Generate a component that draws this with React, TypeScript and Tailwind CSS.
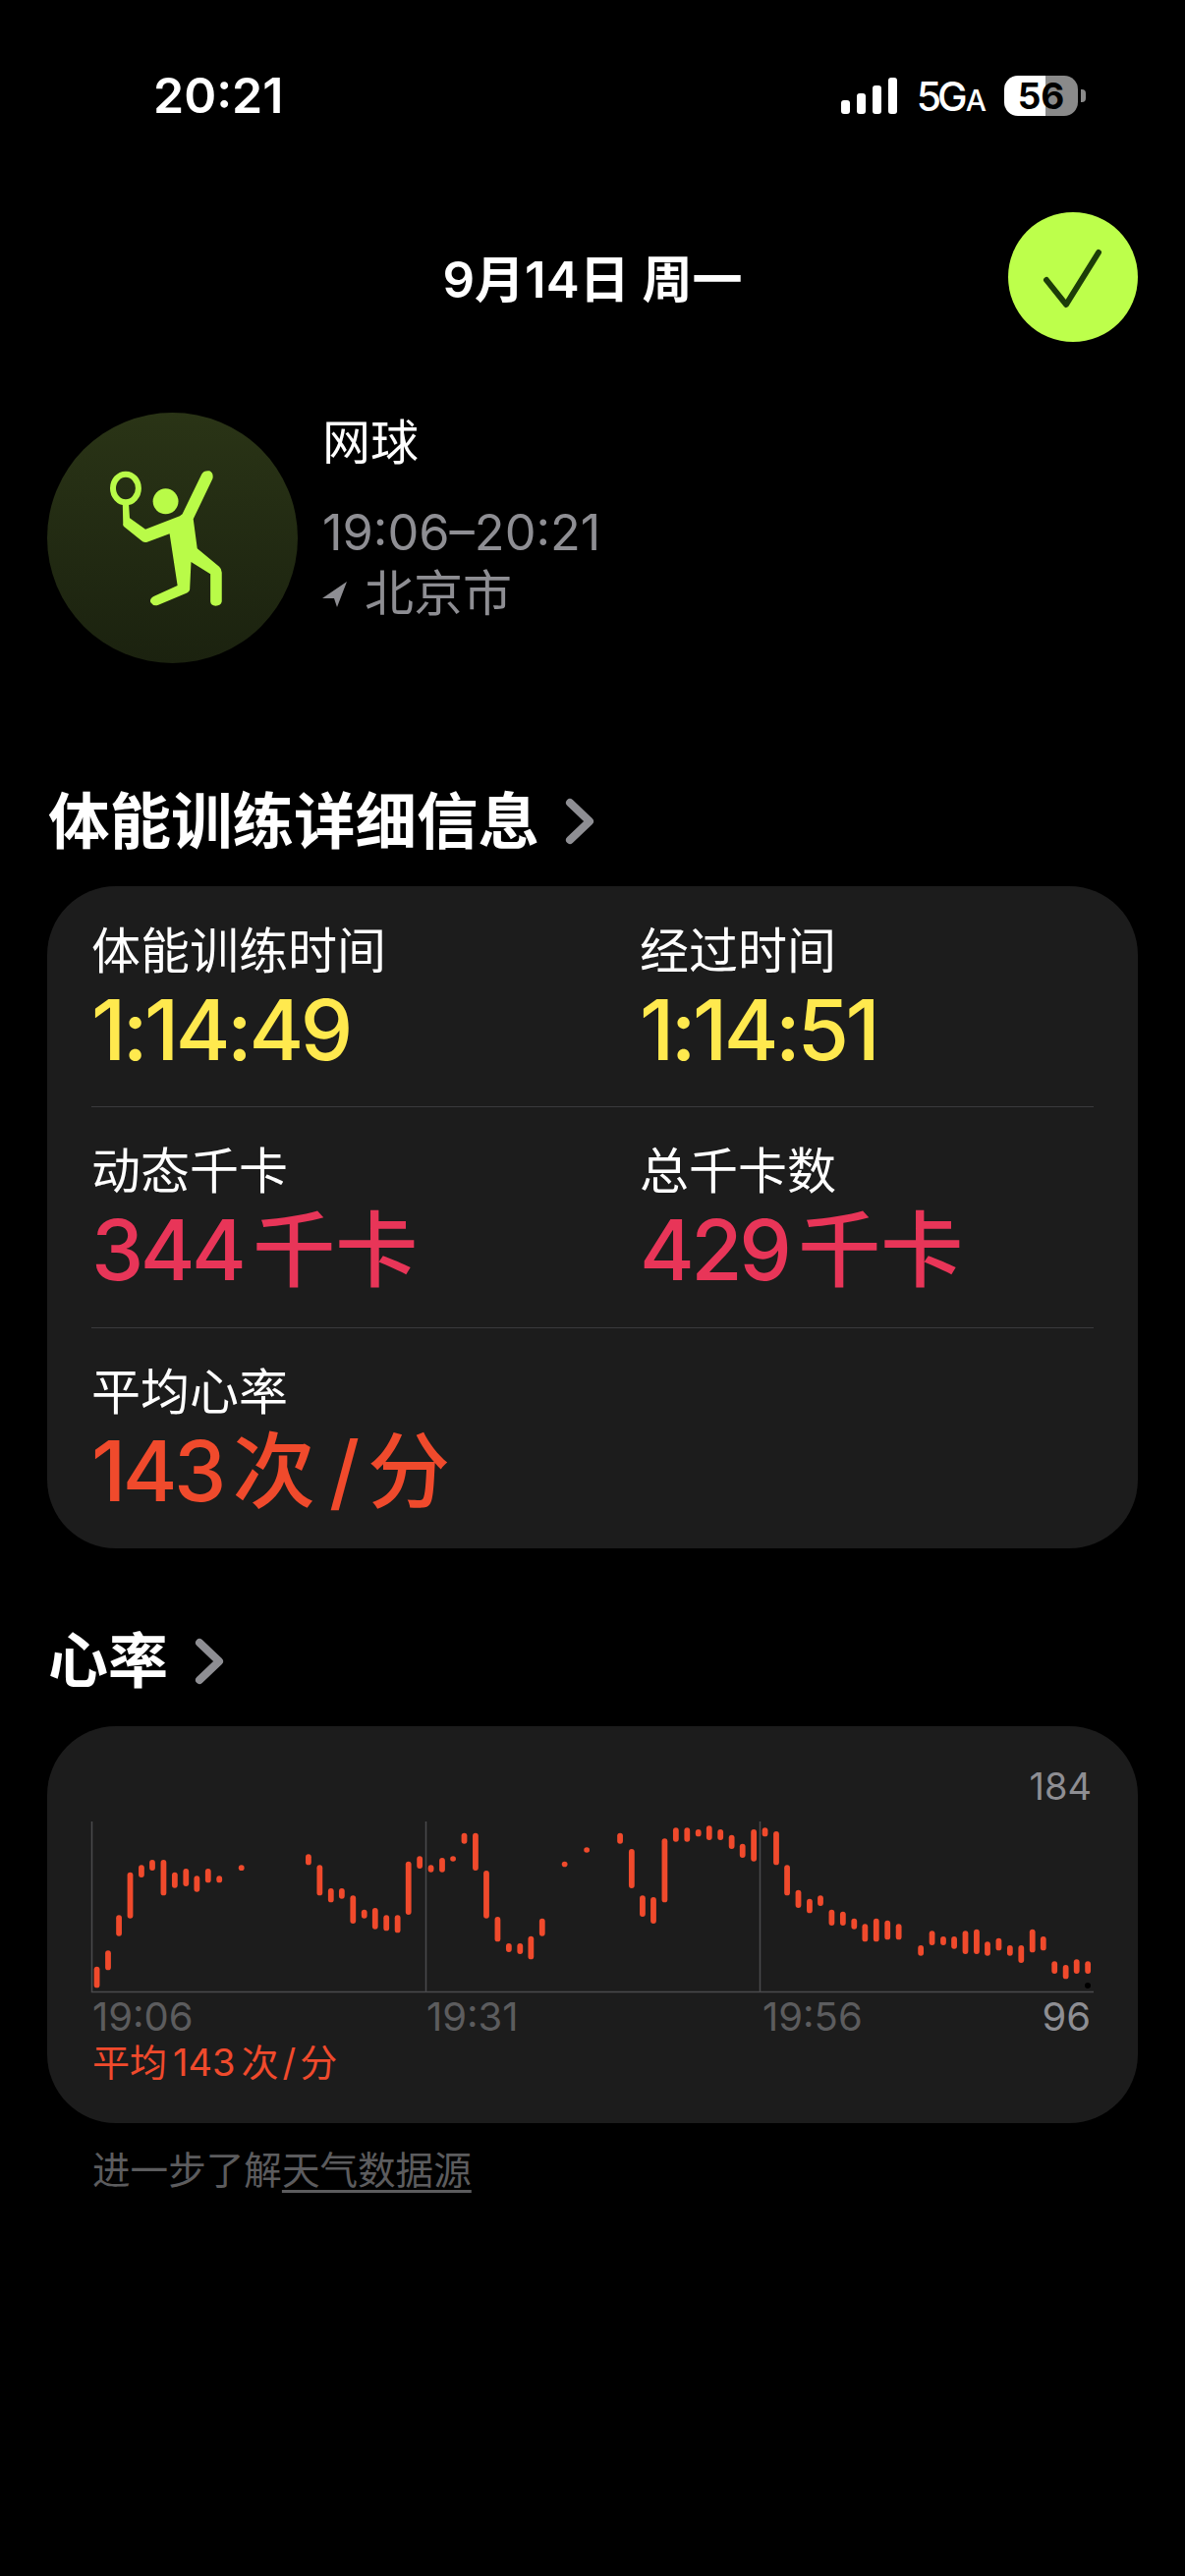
const FONT = "font-['Inter','Noto_Sans_CJK_SC',sans-serif]";

const z3: number[][] = [
  [108, 668, 733], [140, 619, 679], [171, 511, 575], [203, 380, 521], [235, 358, 396], [266, 342, 375],
  [298, 342, 451], [330, 380, 428], [362, 369, 423], [393, 391, 440], [425, 369, 412], [457, 391, 412],
  [520, 358, 375], [711, 325, 358], [743, 358, 451], [775, 429, 472], [806, 429, 461], [838, 451, 537],
  [870, 494, 521], [901, 489, 554], [933, 511, 559], [965, 511, 565], [996, 347, 510], [1028, 331, 369],
  [1060, 358, 380], [1092, 336, 380], [1123, 331, 347], [1155, 260, 293], [1187, 260, 375], [1218, 375, 521],
  [1250, 516, 592], [1282, 597, 624], [1314, 597, 630], [1345, 575, 646], [1377, 521, 575], [1441, 347, 364],
  [1504, 304, 320],
];
const z4: number[][] = [
  [87, 260, 293], [120, 309, 429], [151, 451, 516], [182, 456, 537], [214, 277, 472], [246, 244, 287],
  [278, 244, 287], [310, 249, 271], [341, 238, 282], [373, 249, 282], [405, 266, 309], [436, 293, 336],
  [468, 249, 347], [500, 244, 271], [532, 255, 358], [563, 358, 451], [595, 434, 489], [627, 461, 505],
  [658, 451, 483], [690, 494, 543], [722, 500, 543], [754, 521, 554], [785, 538, 592], [817, 521, 592],
  [849, 527, 586], [881, 538, 586], [944, 603, 635], [976, 559, 603], [1008, 576, 603], [1039, 576, 614],
  [1071, 559, 630], [1103, 554, 630], [1134, 592, 635], [1166, 581, 619], [1198, 603, 635], [1230, 603, 657],
  [1262, 554, 625], [1293, 576, 619], [1325, 652, 690], [1357, 663, 706], [1388, 646, 690], [1420, 652, 690],
];
const bars = [
  ...z3.map(([x, a, b]) => ({ x: 60 + x / 2.8, a: 1780 + a / 3, b: 1780 + b / 3 })),
  ...z4.map(([x, a, b]) => ({ x: 600 + x / 2.8, a: 1780 + a / 3, b: 1780 + b / 3 })),
];

function Chevron() {
  return (
    <svg width="30" height="48" viewBox="0 0 30 48" fill="none" className="shrink-0">
      <path d="M5 5 L25 24 L5 43" stroke="#8e8e93" strokeWidth="8" strokeLinecap="round" strokeLinejoin="round" />
    </svg>
  );
}

function Metric({ label, value, unit, color, wide }: { label: string; value: string; unit?: React.ReactNode; color: string; wide?: boolean }) {
  return (
    <div className={wide ? "w-[558px]" : ""}>
      <div className="text-[50px] leading-[60px] text-white">{label}</div>
      <div className={`mt-[6px] flex items-baseline text-[85px] leading-[90px] font-medium ${color}`}>
        <span className="tracking-[-3.5px]">{value}</span>
        {unit ? <span className="ml-[10px] flex items-baseline text-[84px]">{unit}</span> : null}
      </div>
    </div>
  );
}

function StatusBar() {
  return (
    <div className="flex items-center justify-between h-[41px] mt-[77px] pl-[156px] pr-[101px]">
      <div className="text-[50px] leading-[41px] font-semibold text-white">20:21</div>
      <div className="flex items-center">
        <div className="flex items-end gap-[7px] h-[37px] mr-[20px]">
          <div className="w-[9px] h-[14px] rounded-[3px] bg-white" />
          <div className="w-[9px] h-[21px] rounded-[3px] bg-white" />
          <div className="w-[9px] h-[29px] rounded-[3px] bg-white" />
          <div className="w-[9px] h-[37px] rounded-[3px] bg-white" />
        </div>
        <div className="flex items-baseline text-white font-medium mr-[18px] mt-[5px] leading-[41px]">
          <span className="text-[41px] tracking-[-4px]">5G</span>
          <span className="text-[30px] ml-[2px]">A</span>
        </div>
        <div className="relative w-[75px] h-[41px] flex items-center justify-center">
          <div className="absolute inset-0 rounded-[14px] overflow-hidden flex">
            <div className="w-[42px] bg-white" />
            <div className="flex-1 bg-[#8a8a8a]" />
          </div>
          <div className="relative text-[37px] font-bold text-black leading-[41px]">56</div>
        </div>
        <div className="w-[5px] h-[13px] ml-[3px] rounded-r-[4px] bg-[#8a8a8a]" />
      </div>
    </div>
  );
}

export default function App() {
  return (
    <div className={`w-[1206px] h-[2622px] bg-black overflow-hidden ${FONT}`}>
      <StatusBar />

      <div className="relative mt-[98px] h-[132px] flex items-center justify-center pt-[5px]">
        <div className="text-[51px] leading-[60px] font-semibold text-white">9月14日 周一</div>
        <div className="absolute left-[1026px] top-0 w-[132px] h-[132px] rounded-full bg-[#bdff4b]">
          <svg width="132" height="132" viewBox="0 0 132 132" fill="none">
            <path d="M39 69 L59 94 L92 41" stroke="#1c3d08" strokeWidth="6" strokeLinecap="round" strokeLinejoin="round" />
          </svg>
        </div>
      </div>

      <div className="flex mt-[72px] ml-[48px]">
        <div className="w-[255px] h-[255px] rounded-full bg-linear-to-b from-[#2a3416] to-[#1b220f] shrink-0">
          <svg width="255" height="255" viewBox="108 60 571 765" preserveAspectRatio="none">
            <ellipse cx="287" cy="291" rx="29" ry="43" fill="none" stroke="#b9fb48" strokeWidth="6" vectorEffect="non-scaling-stroke" />
            <ellipse cx="378" cy="331" rx="29" ry="39" fill="#b9fb48" />
            <path
              d="M478 238 Q488 245 485 262 L441 385 L450 475 L500 530 Q506 537 506 548 L506 637 Q504 650 492 650 Q481 650 480 637 L480 553 L436 516 L433 600 Q432 608 424 612 L360 648 Q350 652 344 640 Q340 628 352 620 L405 588 L387 430 L336 455 Q328 458 322 450 L283 408 Q280 404 281 398 L280 340 L294 340 L296 382 L332 416 L410 376 L416 370 L460 248 Q465 236 478 238 Z"
              fill="#b9fb48"
            />
          </svg>
        </div>
        <div className="ml-[25px] pt-[1px]">
          <div className="text-[49px] leading-[60px] text-white">网球</div>
          <div className="mt-[31px] text-[50.5px] leading-[60px] text-[#8e8e93]">19:06–20:21</div>
          <div className="flex items-center mt-[2px] text-[#8e8e93]">
            <svg width="26" height="26" viewBox="0 0 26 26" className="shrink-0 mt-[2px]">
              <path d="M25 0 L0 17 L12 17 L15 26 Z" fill="#8e8e93" />
            </svg>
            <span className="ml-[17px] text-[50px] leading-[60px]">北京市</span>
          </div>
        </div>
      </div>

      <div className="flex items-center mt-[126px] ml-[49px] h-[70px]">
        <span className="text-[62.5px] leading-[70px] font-bold text-white">体能训练详细信息</span>
        <span className="ml-[26px]"><Chevron /></span>
      </div>

      <div className="mt-[31px] mx-[48px] h-[674px] rounded-[70px] bg-[#1c1c1c] px-[45px] pt-[36px]">
        <div className="flex h-[188px]">
          <Metric wide label="体能训练时间" value="1:14:49" color="text-[#ffe94e]" />
          <Metric label="经过时间" value="1:14:51" color="text-[#ffe94e]" />
        </div>
        <div className="h-px bg-[#3a3a3c]" />
        <div className="flex h-[224px] pt-[35px]">
          <Metric wide label="动态千卡" value="344" unit="千卡" color="text-[#e83558]" />
          <Metric label="总千卡数" value="429" unit="千卡" color="text-[#e83558]" />
        </div>
        <div className="h-px bg-[#3a3a3c]" />
        <div className="pt-[35px]">
          <Metric
            label="平均心率"
            value="143"
            color="text-[#f04a2c]"
            unit={
              <>
                <span>次</span>
                <span className="ml-[14px] mr-[8px]">/</span>
                <span>分</span>
              </>
            }
          />
        </div>
      </div>

      <div className="flex items-center mt-[80px] ml-[49px] h-[70px]">
        <span className="text-[61px] leading-[70px] font-bold text-white">心率</span>
        <span className="ml-[27px]"><Chevron /></span>
      </div>

      <div className="mt-[31px] mx-[48px] h-[404px] rounded-[70px] bg-[#1c1c1c] pt-[38px]">
        <div className="text-right pr-[47px] text-[38px] leading-[46px] text-[#8e8e93]">184</div>
        <svg width="1110" height="180" viewBox="48 1852 1110 180" className="block mt-[10px]">
          <path d="M93.5 1855 V2028.5 H1113 M433.5 1855 V2028 M773.5 1855 V2028" stroke="#4a4a4c" strokeWidth="1.5" fill="none" />
          {bars.map((b, i) => (
            <rect key={i} x={b.x - 2.9} y={b.a} width="5.8" height={b.b - b.a} rx="2.9" fill="#f04a2c" />
          ))}
          <circle cx="1107" cy="2022" r="3" fill="#000" />
        </svg>
        <div className="flex text-[40px] leading-[46px] text-[#5c5c5e] mt-[-1px] pl-[46px] pr-[48px]">
          <div className="w-[340px]">19:06</div>
          <div className="w-[342px]">19:31</div>
          <div className="flex-1">19:56</div>
          <div className="text-[#8e8e93]">96</div>
        </div>
        <div className="flex ml-[46px] mt-[-1px] text-[38px] leading-[48px] text-[#f04a2c]">
          <span>平均</span>
          <span className="ml-[6px]">143</span>
          <span className="ml-[6px]">次</span>
          <span className="mx-[4px]">/</span>
          <span>分</span>
        </div>
      </div>

      <div className="mt-[23px] ml-[94px] text-[38.6px] leading-[50px] text-[#5c5c5e]">
        进一步了解<span className="underline underline-offset-[6px]">天气数据源</span>
      </div>
    </div>
  );
}
